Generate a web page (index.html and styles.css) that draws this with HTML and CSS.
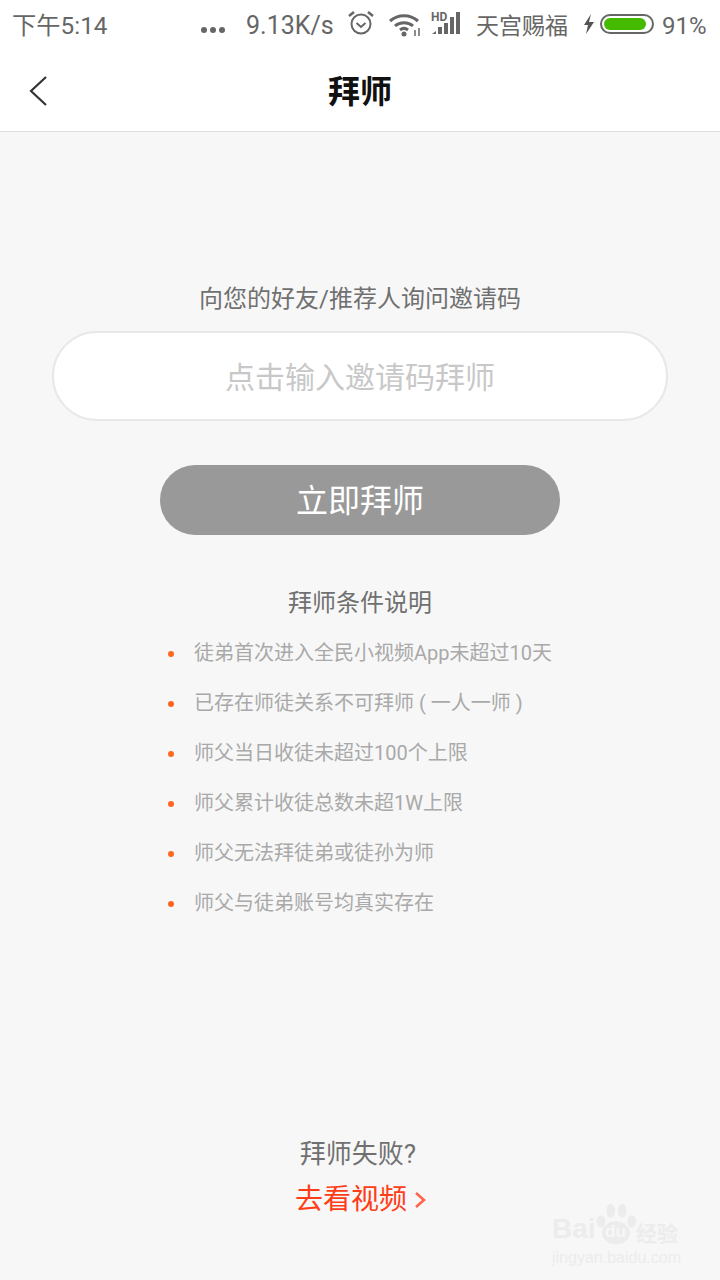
FILE: index.html
```html
<!DOCTYPE html>
<html lang="zh-CN">
<head>
    <meta charset="UTF-8">
    <meta name="viewport" content="width=device-width, initial-scale=1.0">
    <title>拜师</title>
    <link rel="stylesheet" href="styles.css">
</head>
<body>
    <div class="statusbar">
        <span class="time">下午5:14</span>
        <span class="dots"><i></i><i></i><i></i></span>
        <span class="speed">9.13K/s</span>
        <svg class="alarm" width="28" height="28" viewBox="0 0 28 28" fill="none" stroke="#666" stroke-width="2">
            <circle cx="14" cy="15" r="9.5"/>
            <path d="M9.5 14l4.5 4 4.5-4"/>
            <path d="M2 7l5-4M26 7l-5-4" stroke-width="2.5"/>
        </svg>
        <svg class="wifi" width="34" height="26" viewBox="0 0 34 26" fill="none" stroke="#666" stroke-width="3">
            <path d="M2 10c8-7 20-7 28 0"/>
            <path d="M7 15c5-4.500 13-4.500 18 0"/>
            <path d="M12 19c2.500-2 5.500-2 8 0"/>
            <circle cx="16" cy="23" r="2.500" fill="#666" stroke="none"/>
            <path d="M27 19v6M31 17v8" stroke-width="1.500"/>
        </svg>
        <svg class="signal" width="32" height="30" viewBox="0 -4 32 30">
            <text x="0" y="11" class="hd">HD</text>
            <path d="M1 24l4-3v3z" fill="#666"/>
            <rect x="7" y="17" width="4" height="7" fill="#666"/>
            <rect x="13" y="13" width="4" height="11" fill="#666"/>
            <rect x="19" y="7" width="4" height="17" fill="#666"/>
            <rect x="25" y="2" width="4" height="22" fill="#666"/>
        </svg>
        <span class="carrier">天宫赐福</span>
        <svg class="bolt" width="12" height="20" viewBox="0 0 12 20"><path d="M8 0L1 11h4l-2 9 8-12H6z" fill="#555"/></svg>
        <span class="battery"><span class="battery-fill"></span></span>
        <span class="percent">91%</span>
    </div>

    <header class="navbar">
        <svg class="back" width="20" height="32" viewBox="0 0 20 32" fill="none" stroke="#333" stroke-width="2.200">
            <path d="M18 2L3 16l15 14"/>
        </svg>
        <h1>拜师</h1>
    </header>

    <main class="content">
        <p class="hint">向您的好友/推荐人询问邀请码</p>
        <div class="code-input">点击输入邀请码拜师</div>
        <button class="submit">立即拜师</button>

        <h2>拜师条件说明</h2>
        <ul class="rules">
            <li>徒弟首次进入全民小视频App未超过10天</li>
            <li>已存在师徒关系不可拜师 ( 一人一师 )</li>
            <li>师父当日收徒未超过100个上限</li>
            <li>师父累计收徒总数未超1W上限</li>
            <li>师父无法拜徒弟或徒孙为师</li>
            <li>师父与徒弟账号均真实存在</li>
        </ul>

        <div class="failed">
            <p>拜师失败?</p>
            <a class="watch">去看视频
                <svg width="12" height="18" viewBox="0 0 12 18" fill="none" stroke="#ff6347" stroke-width="2.500"><path d="M2 2l8 7-8 7"/></svg>
            </a>
        </div>
    </main>

    <div class="watermark">
        <div class="wm-top">
            <span class="wm-bai">Bai</span>
            <svg class="wm-paw" width="44" height="44" viewBox="0 0 50 50" fill="#ececec">
                <ellipse cx="8" cy="22" rx="5" ry="7"/>
                <ellipse cx="19" cy="10" rx="5" ry="8"/>
                <ellipse cx="32" cy="10" rx="5" ry="8"/>
                <ellipse cx="43" cy="22" rx="5" ry="7"/>
                <ellipse cx="25" cy="35" rx="16" ry="13"/>
            </svg>
            <span class="wm-du">du</span>
            <span class="wm-jy">经验</span>
        </div>
        <div class="wm-url">jingyan.baidu.com</div>
    </div>
</body>
</html>
```

FILE: styles.css
```css
* {
    box-sizing: border-box;
}

html, body {
    height: 100%;
}

body {
    margin: 0;
    position: relative;
    height: 1280px;
    overflow: hidden;
    background-color: #f7f7f7;
    font-family: "Roboto", "Noto Sans CJK SC", sans-serif;
    display: flex;
    flex-direction: column;
}

.statusbar {
    height: 50px;
    background-color: #fff;
    display: flex;
    align-items: center;
    padding: 0 12px;
    color: #666;
    font-size: 24px;
}

.time {
    width: 189px;
    font-size: 24.3px;
    margin-bottom: 4px;
}

.dots {
    display: flex;
    gap: 3px;
    width: 46px;
    padding-top: 10px;
}

.dots i {
    width: 6px;
    height: 6px;
    border-radius: 50%;
    background-color: #666;
}

.speed {
    width: 100px;
    font-size: 25px;
    margin-top: 1px;
    margin-left: -1px;
}

.alarm {
    margin-left: 1px;
    margin-bottom: 4px;
}

.wifi {
    margin-left: 13px;
    margin-bottom: 2px;
}

.signal {
    margin-left: 9px;
    margin-bottom: 8px;
}

.hd {
    font-size: 12px;
    font-weight: 700;
    fill: #666;
}

.carrier {
    margin-left: 13px;
    font-size: 23px;
    width: 106px;
    margin-bottom: 2px;
}

.bolt {
    margin-left: 1px;
    margin-bottom: 2px;
}

.battery {
    margin-left: 5px;
    width: 54px;
    height: 20px;
    border: 2px solid #666;
    border-radius: 10px;
    padding: 2px;
    margin-bottom: 2px;
}

.battery-fill {
    display: block;
    width: 92%;
    height: 100%;
    background-color: #44bb00;
    border-radius: 6px;
}

.percent {
    margin-left: 8px;
    margin-top: 1px;
}

.navbar {
    height: 82px;
    background-color: #fff;
    border-bottom: 1px solid #e0e0e0;
    display: flex;
    align-items: center;
    justify-content: center;
    position: relative;
}

.navbar h1 {
    margin: 0 0 4px;
    font-size: 32px;
    font-weight: 700;
    color: #111;
}

.back {
    position: absolute;
    left: 28px;
    top: 25px;
}

.content {
    flex: 1;
    display: flex;
    flex-direction: column;
    align-items: center;
    padding-top: 149px;
}

.hint {
    margin: 0;
    font-size: 24px;
    line-height: 36px;
    color: #707070;
}

.code-input {
    width: 616px;
    height: 90px;
    margin-top: 14px;
    padding-bottom: 3px;
    background-color: #fff;
    border: 2px solid #e8e8e8;
    border-radius: 45px;
    display: flex;
    align-items: center;
    justify-content: center;
    font-size: 30px;
    color: #c8c8c8;
}

.submit {
    width: 400px;
    height: 70px;
    margin-top: 44px;
    padding-bottom: 5px;
    border: none;
    border-radius: 35px;
    background-color: #999;
    color: #fff;
    font-family: inherit;
    font-size: 32px;
}

h2 {
    margin: 50px 0 0;
    font-size: 24px;
    line-height: 36px;
    font-weight: 400;
    color: #707070;
}

.rules {
    list-style: none;
    margin: 7px 0 0;
    padding: 0 0 0 194px;
    width: 100%;
}

.rules li {
    position: relative;
    height: 50px;
    line-height: 50px;
    font-size: 20px;
    color: #a9a9a9;
}

.rules li::before {
    content: "";
    position: absolute;
    left: -26px;
    top: 23px;
    width: 6px;
    height: 6px;
    border-radius: 50%;
    background-color: #ff6620;
}

.failed {
    margin-top: 208px;
    text-align: center;
}

.failed p {
    margin: 0 4px 0 0;
    font-size: 26px;
    line-height: 36px;
    color: #707070;
}

.watch {
    display: flex;
    align-items: center;
    gap: 7px;
    margin-top: 7px;
    padding-left: 1px;
    font-size: 28px;
    line-height: 42px;
    color: #ff3d17;
}

.watermark {
    position: absolute;
    left: 552px;
    top: 1202px;
    width: 132px;
    color: #ececec;
}

.wm-top {
    display: flex;
    align-items: flex-end;
    height: 44px;
    position: relative;
    font-family: "Liberation Sans", sans-serif;
}

.wm-bai {
    font-size: 28px;
    font-weight: 700;
    line-height: 34px;
}

.wm-paw {
    position: absolute;
    left: 42px;
    top: 0;
}

.wm-du {
    position: absolute;
    left: 53px;
    top: 20px;
    font-size: 17px;
    font-weight: 700;
    line-height: 20px;
    color: #f7f7f7;
}

.wm-jy {
    position: absolute;
    left: 84px;
    top: 16px;
    font-family: "Noto Sans CJK SC", sans-serif;
    font-size: 21px;
    line-height: 28px;
    font-weight: 700;
}

.wm-url {
    font-family: "Liberation Sans", sans-serif;
    font-size: 16px;
    line-height: 20px;
    margin-top: 2px;
    white-space: nowrap;
}
```
